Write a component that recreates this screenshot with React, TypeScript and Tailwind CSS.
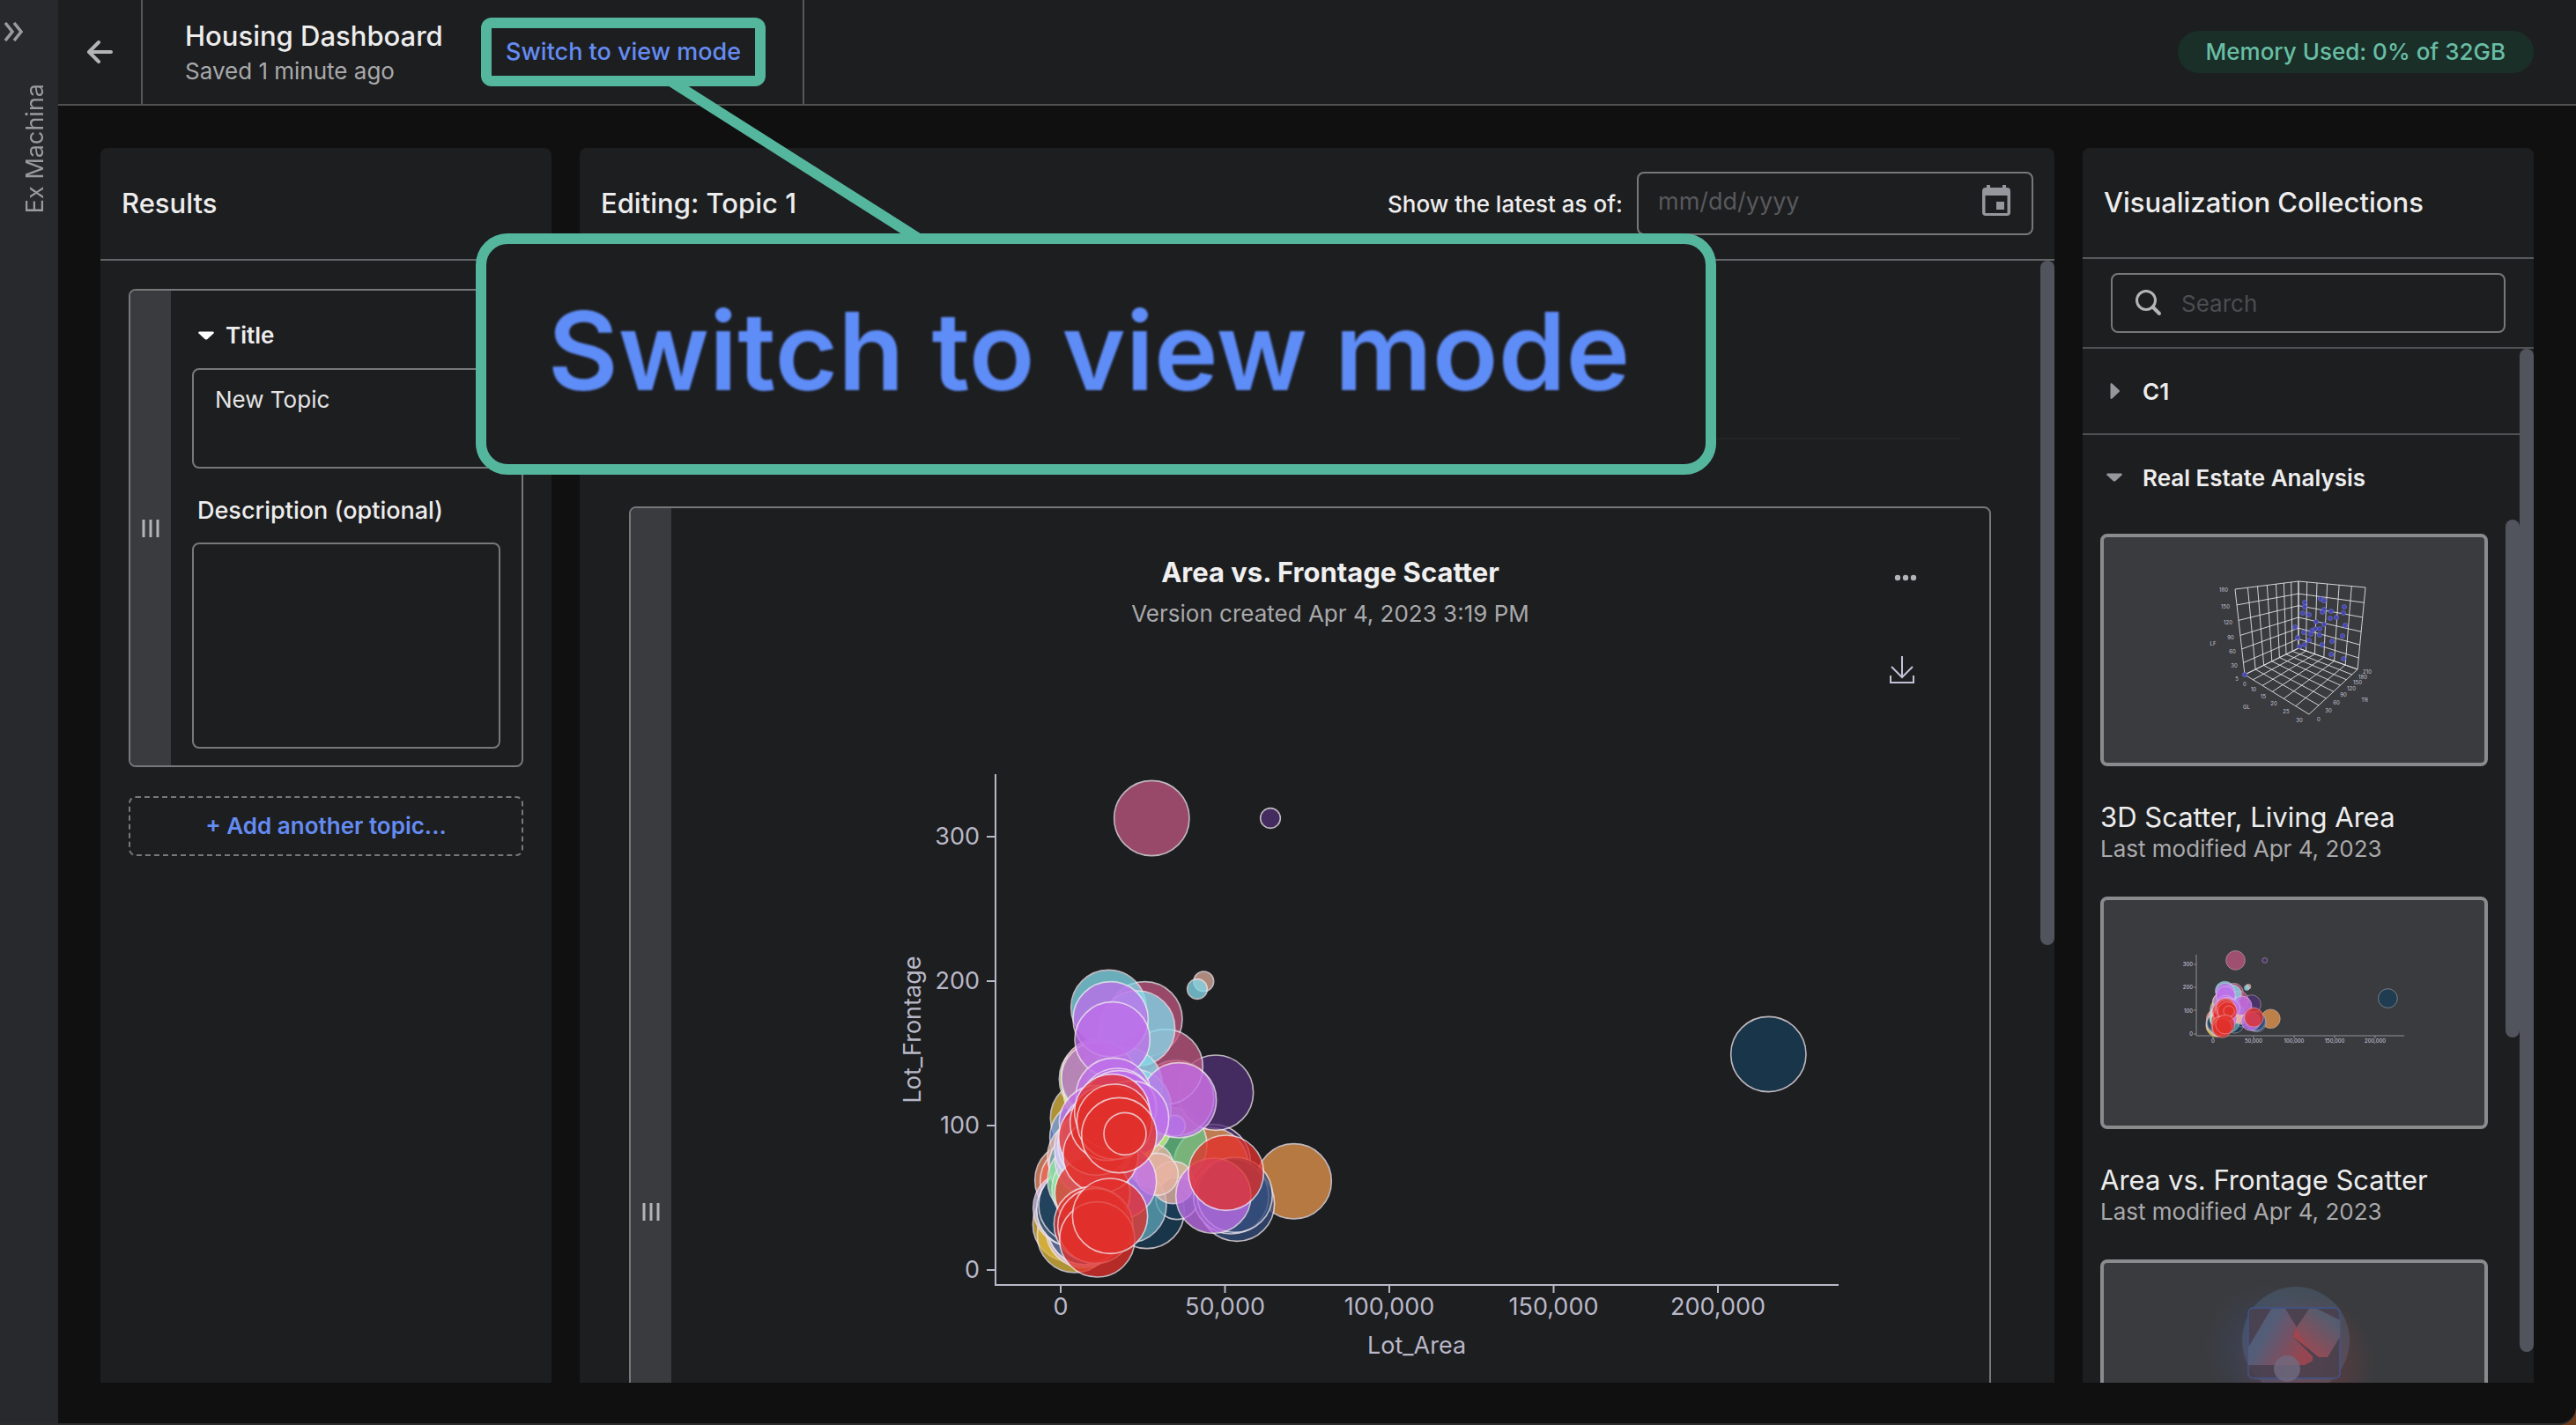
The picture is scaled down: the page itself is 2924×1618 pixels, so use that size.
import React from "react";

type Bubble = [cx: number, cy: number, r: number, fill: string];

const PINK = "#be577f";
const CYAN = "#82d9ea";
const PURPLE = "#bf6eea";
const RED = "#e2302b";
const NAVY = "#193d57";
const INDIGO = "#334c7b";
const PLUM = "#503175";
const ORANGE = "#e6954d";
const GREEN = "#66c485";
const YELLOW = "#dcb63d";
const TEAL = "#5da3b5";
const LIME = "#c4f56f";
const PEACH = "#e8b3a2";
const MINT = "#8fe8a0";
const LAVENDER = "#cfc4f2";

/* Bubble centres are thirds of a pixel, measured from the cluster's own corner. */
const CLUSTER: Bubble[] = [
  [285, 688, 128, YELLOW],
  [225, 1050, 128, YELLOW],
  [240, 1087, 128, YELLOW],
  [232, 900, 128, "#ef8d68"],
  [250, 905, 128, "#ef6a5a"],
  [270, 1070, 128, LAVENDER],
  [275, 1060, 128, INDIGO],
  [226, 995, 128, LAVENDER],
  [238, 1000, 128, NAVY],
  [245, 985, 128, NAVY],
  [283, 755, 128, "#6f9be0"],
  [275, 820, 128, PEACH],
  [280, 850, 128, TEAL],
  [275, 900, 128, MINT],
  [290, 930, 128, MINT],
  [315, 555, 128, LIME],
  [330, 600, 128, LIME],
  [710, 838, 128, PLUM],
  [703, 850, 128, ORANGE],
  [562, 780, 128, GREEN],
  [445, 700, 128, LIME],
  [300, 830, 128, LAVENDER],
  [298, 790, 128, LAVENDER],
  [485, 1005, 128, NAVY],
  [588, 962, 72, NAVY],
  [424, 985, 128, TEAL],
  [500, 850, 75, PEACH],
  [575, 908, 72, PEACH],
  [520, 880, 72, PEACH],
  [720, 602, 128, PLUM],
  [478, 352, 128, PINK],
  [585, 620, 128, PINK],
  [548, 514, 128, PINK],
  [322, 545, 128, PINK],
  [355, 312, 128, CYAN],
  [453, 383, 128, CYAN],
  [410, 575, 128, CYAN],
  [322, 555, 128, "#b58ac8"],
  [440, 650, 128, CYAN],
  [362, 352, 128, PURPLE],
  [368, 421, 128, PURPLE],
  [580, 715, 36, "#8f86e8"],
  [594, 628, 128, PURPLE],
  [372, 612, 128, PURPLE],
  [385, 647, 128, PURPLE],
  [390, 655, 128, PURPLE],
  [432, 690, 128, PURPLE],
  [390, 905, 128, PURPLE],
  [315, 705, 128, PURPLE],
  [325, 735, 128, PURPLE],
  [310, 780, 128, LAVENDER],
  [792, 980, 128, INDIGO],
  [772, 955, 128, INDIGO],
  [785, 950, 128, INDIGO],
  [712, 953, 128, PURPLE],
  [755, 875, 128, RED],
  [986, 904, 128, ORANGE],
  [300, 945, 128, RED],
  [313, 755, 128, RED],
  [328, 815, 128, RED],
  [352, 705, 128, RED],
  [367, 667, 128, RED],
  [375, 701, 128, RED],
  [391, 747, 128, RED],
  [411, 742, 72, RED],
  [297, 1050, 128, RED],
  [310, 1056, 128, RED],
  [316, 1102, 128, RED],
  [360, 1022, 128, RED],
  [679, 223, 34, "#d9a898"],
  [657, 249, 34, CYAN],
  [502, -333, 128, PINK],
  [906, -333, 34, PLUM],
  [2602, 471, 128, NAVY],
];

/* The orange bubble on the right sits beneath the red and indigo ones. */
const ORDERED: Bubble[] = [
  ...CLUSTER.filter(([x, , , f]) => f === ORANGE && x > 900),
  ...CLUSTER.filter(([x, , , f]) => !(f === ORANGE && x > 900)),
];

/* Centres relative to the data origin (0, 0) of the plot, in plot pixels. */
const BUBBLES: Bubble[] = ORDERED.map(([x, y, r, f]) => [x / 3 - 64, y / 3 - 402, r / 3, f]);

const X_TICKS = ["0", "50,000", "100,000", "150,000", "200,000"];
const Y_TICKS = ["0", "100", "200", "300"];

function Bubbles({ ox, oy, sx, sy, sr }: { ox: number; oy: number; sx: number; sy: number; sr: number }) {
  return (
    <g stroke="#f0e6ee" strokeWidth={sr < 1 ? 0.5 : 1.6}>
      {BUBBLES.map(([x, y, r, fill], i) => (
        <circle key={i} cx={ox + x * sx} cy={oy + y * sy} r={r * sr} fill={fill} opacity={0.77} />
      ))}
    </g>
  );
}

function ScatterChart() {
  return (
    <svg viewBox="0 0 1496 700" className="mt-[83px] block w-full" role="img" aria-label="Lot_Frontage against Lot_Area">
      <g stroke="#b9b8c8" strokeWidth="2" fill="none">
        <path d="M368 19V599H1325" />
        {Y_TICKS.map((t, i) => (
          <path key={t} d={`M358 ${582 - i * 164}h10`} />
        ))}
        {X_TICKS.map((t, i) => (
          <path key={t} d={`M${442 + i * 186.5} 599v9`} />
        ))}
      </g>
      <g fill="#b9b8c8" fontSize="27">
        {Y_TICKS.map((t, i) => (
          <text key={t} x="350" y={591 - i * 164} textAnchor="end">
            {t}
          </text>
        ))}
        {X_TICKS.map((t, i) => (
          <text key={t} x={442 + i * 186.5} y="633" textAnchor="middle">
            {t}
          </text>
        ))}
        <text x="846" y="677" textAnchor="middle">
          Lot_Area
        </text>
        <text transform="translate(283 309) rotate(-90)" textAnchor="middle">
          Lot_Frontage
        </text>
      </g>
      <Bubbles ox={442} oy={582} sx={1} sy={1} sr={1} />
    </svg>
  );
}

type Pt = [number, number];
const mix = (a: Pt, b: Pt, t: number): Pt => [a[0] + (b[0] - a[0]) * t, a[1] + (b[1] - a[1]) * t];
const seg = (a: Pt, b: Pt) => `M${a[0].toFixed(1)} ${a[1].toFixed(1)}L${b[0].toFixed(1)} ${b[1].toFixed(1)}`;

function CubeThumb() {
  const TL: Pt = [153, 63];
  const TB: Pt = [225, 54];
  const TR: Pt = [301, 61];
  const BL: Pt = [164, 160];
  const BB: Pt = [225, 130];
  const BR: Pt = [292, 154];
  const F: Pt = [237, 205];
  const left = [0, 0.2, 0.354, 0.505, 0.646, 0.77, 0.885, 1];
  const right = [0, 0.128, 0.276, 0.43, 0.606, 0.793, 1];
  const down = [0, 0.185, 0.365, 0.54, 0.7, 0.86, 1];
  const d = [
    ...left.map((t) => seg(mix(TL, TB, t), mix(BL, BB, t))),
    ...right.map((t) => seg(mix(TB, TR, t), mix(BB, BR, t))),
    ...down.map((t) => seg(mix(TL, BL, t), mix(TB, BB, t))),
    ...down.map((t) => seg(mix(TB, BB, t), mix(TR, BR, t))),
    ...left.map((t) => seg(mix(BL, BB, t), mix(F, BR, t))),
    ...right.map((t) => seg(mix(BL, F, t), mix(BB, BR, t))),
  ].join("");
  const dots: Pt[] = [
    [232, 78], [232, 83], [230, 90], [237, 92], [250, 74], [254, 76], [254, 86], [252, 89], [262, 88], [277, 83],
    [276, 90], [261, 96], [268, 95], [245, 100], [254, 103], [278, 104], [221, 106], [231, 112], [240, 110],
    [244, 108], [249, 108], [239, 114], [249, 115], [275, 116], [224, 118], [237, 121], [263, 122], [252, 126],
    [226, 128], [232, 126], [262, 137], [276, 142], [164, 160],
  ];
  const labels: [number, number, string][] = [
    [140, 64, "180"], [142, 83, "150"], [145, 101, "120"], [148, 118, "90"], [150, 134, "60"], [152, 150, "30"],
    [128, 125, "LF"], [155, 165, "5"], [164, 171, "0"], [174, 177, "10"], [185, 185, "15"], [197, 193, "20"],
    [211, 202, "25"], [226, 212, "30"], [248, 211, "0"], [166, 197, "GL"], [259, 201, "30"], [268, 192, "60"],
    [276, 183, "90"], [285, 176, "120"], [292, 169, "150"], [298, 163, "180"], [303, 157, "210"], [300, 189, "TR"],
  ];
  return (
    <svg viewBox="0 0 440 264" className="block w-full" role="img" aria-label="3D scatter preview">
      <path d={d} stroke="#e4e4e8" strokeWidth="0.9" fill="none" />
      {dots.map(([x, y], i) => (
        <circle key={i} cx={x} cy={y} r="2.6" fill="#4548b4" stroke="#7c7fd0" strokeWidth="0.5" />
      ))}
      <g fill="#c4c3da" fontSize="6" textAnchor="middle">
        {labels.map(([x, y, t], i) => (
          <text key={i} x={x} y={y + 2}>
            {t}
          </text>
        ))}
      </g>
    </svg>
  );
}

function ScatterThumb() {
  return (
    <svg viewBox="0 0 440 264" className="block w-full" role="img" aria-label="Area and frontage preview">
      <path
        d="M109 66V158H345M106 77h3M106 103h3M106 129h3M106 156h3M128 158v3M174 158v3M220 158v3M266 158v3M312 158v3"
        stroke="#8f8f9c"
        strokeWidth="1"
        fill="none"
      />
      <g fill="#d4d3e0" fontSize="6">
        {Y_TICKS.map((t, i) => (
          <text key={t} x="105" y={158 - i * 26.3} textAnchor="end">
            {t}
          </text>
        ))}
        {X_TICKS.map((t, i) => (
          <text key={t} x={128 + i * 46} y="166" textAnchor="middle">
            {t}
          </text>
        ))}
      </g>
      <Bubbles ox={128} oy={155} sx={0.247} sy={0.161} sr={0.255} />
    </svg>
  );
}

function GlowThumb() {
  return (
    <svg viewBox="0 0 440 264" className="block w-full" role="img" aria-label="Abstract shapes preview">
      <defs>
        <radialGradient id="glowRed">
          <stop offset="0" stopColor="#b8444c" stopOpacity="0.38" />
          <stop offset="1" stopColor="#b8444c" stopOpacity="0" />
        </radialGradient>
        <radialGradient id="glowBlue">
          <stop offset="0" stopColor="#4862b0" stopOpacity="0.25" />
          <stop offset="1" stopColor="#4862b0" stopOpacity="0" />
        </radialGradient>
        <linearGradient id="shapeA" x1="0" y1="0" x2="1" y2="0.5">
          <stop offset="0.4" stopColor="#545d78" />
          <stop offset="1" stopColor="#964650" />
        </linearGradient>
        <linearGradient id="shapeB" x1="0.8" y1="0" x2="0.2" y2="0.8">
          <stop offset="0.2" stopColor="#565c6e" />
          <stop offset="1" stopColor="#964a54" />
        </linearGradient>
      </defs>
      <circle cx="222" cy="92" r="61" fill="#444e5a" />
      <circle cx="190" cy="100" r="74" fill="url(#glowBlue)" />
      <circle cx="232" cy="118" r="80" fill="url(#glowRed)" />
      <rect x="168" y="55" width="104" height="80" rx="6" fill="#4a3f4c" fillOpacity="0.8" stroke="#40558c" strokeWidth="1.5" />
      <path d="M194 56H210L223 77L219 88L241 110V115L232 120H168V100Z" fill="url(#shapeA)" />
      <path d="M237 56H246L272 69V88L258 111H248L220 88L223 77Z" fill="url(#shapeB)" />
      <path d="M222 78L219 88L236 101Z" fill="#a0464f" />
      <circle cx="212" cy="124" r="15" fill="#716a80" fillOpacity="0.8" />
    </svg>
  );
}

function Grip() {
  return (
    <div className="flex w-[46px] shrink-0 items-center justify-center bg-[#3a3b3e]">
      <svg width="20" height="22" viewBox="0 0 20 22" aria-hidden="true">
        <path d="M2 1v20M10 1v20M18 1v20" stroke="#b4b4b8" strokeWidth="3" />
      </svg>
    </div>
  );
}

function CaretDown({ color }: { color: string }) {
  return (
    <svg width="20" height="20" viewBox="0 0 20 20" aria-hidden="true">
      <path d="M2 5.500h16q1.500 .8.500 2l-7 6.500q-1.500 1.200-3 0l-7-6.500q-1-1.200.500-2z" fill={color} />
    </svg>
  );
}

function CaretRight({ color }: { color: string }) {
  return (
    <svg width="20" height="20" viewBox="0 0 20 20" aria-hidden="true">
      <path d="M5.500 2v16q.8 1.500 2 .500l8-7.500q1.200-1 0-2l-8-7.500q-1.200-1-2 .500z" fill={color} />
    </svg>
  );
}

function Scrollbar({ thumb }: { thumb: string }) {
  return (
    <div className="w-4 shrink-0">
      <div className={`w-full rounded-full bg-[#52545d] ${thumb}`} />
    </div>
  );
}

function VizCard({ title, children }: { title?: string; children: React.ReactNode }) {
  return (
    <article className="mb-9">
      <div className="h-[264px] overflow-hidden rounded-lg border-4 border-[#8a8b8c] bg-[#3a3b3e]">
        <div className="-m-1">{children}</div>
      </div>
      {title && (
        <>
          <h3 className="mt-10 text-[31px] leading-9 text-[#ededed]">{title}</h3>
          <p className="text-[26px] leading-9 text-[#a9a9ab]">Last modified Apr 4, 2023</p>
        </>
      )}
    </article>
  );
}

function Sidebar() {
  return (
    <nav className="w-[66px] shrink-0 bg-[#28292c] text-[#9b9b9e]" aria-label="Main">
      <button type="button" aria-label="Expand menu" className="block pt-[25px] pl-1">
        <svg width="24" height="22" viewBox="0 0 24 22" fill="none" stroke="currentColor" strokeWidth="3.500">
          <path d="M2 1l8 10-8 10M12 1l8 10-8 10" />
        </svg>
      </button>
      <div className="mt-12 ml-[22px] rotate-180 text-[27px] leading-9 [writing-mode:vertical-rl]">Ex Machina</div>
    </nav>
  );
}

function Header() {
  return (
    <header className="flex h-[120px] shrink-0 items-stretch border-b-2 border-[#505052] bg-[#1d1e20]">
      <button type="button" aria-label="Back" className="flex w-24 items-center justify-center border-r-2 border-[#58585b] text-[#b4b4b6]">
        <svg width="30" height="26" viewBox="0 0 30 26" fill="none" stroke="currentColor" strokeWidth="4">
          <path d="M28 13H4M14 2L3 13l11 11" strokeLinecap="round" strokeLinejoin="round" />
        </svg>
      </button>
      <div className="flex items-center border-r-2 border-[#58585b] pr-[42px] pl-12">
        <div className="w-[336px] pt-1">
          <h1 className="text-[31px] leading-10 font-medium text-[#ededed]">Housing Dashboard</h1>
          <p className="text-[26px] leading-10 text-[#a9a9ab]">Saved 1 minute ago</p>
        </div>
        <div className="rounded-xl bg-[#55b69e] p-3">
          <button type="button" className="bg-[#1d1e20] px-4 text-[27px] leading-[54px] font-medium text-[#648cf2]">
            Switch to view mode
          </button>
        </div>
      </div>
      <div className="mr-12 ml-auto self-center rounded-full bg-[#1a2f28] px-8 text-[26px] leading-[48px] font-medium text-[#68bea5]">
        Memory Used: 0% of 32GB
      </div>
    </header>
  );
}

function ResultsPanel() {
  return (
    <section className="w-[512px] shrink-0 overflow-hidden rounded-t-lg bg-[#1d1e20]">
      <h2 className="h-32 border-b-2 border-[#646568] pl-6 text-[31px] leading-[126px] font-medium text-[#ededed]">Results</h2>
      <div className="px-8 pt-8">
        <div className="flex overflow-hidden rounded-lg border-2 border-[#77787a]">
          <Grip />
          <div className="flex flex-1 flex-col px-6 pt-8 pb-[19px]">
            <label htmlFor="topic-title" className="flex items-center gap-3 pl-1.5 text-[26px] leading-[38px] font-semibold text-[#ededed]">
              <CaretDown color="#ffffff" />
              Title
            </label>
            <textarea
              id="topic-title"
              defaultValue="New Topic"
              className="mt-[18px] block h-[114px] w-full resize-none rounded-lg border-2 border-[#77787a] bg-transparent px-6 py-4 text-[26px] leading-9 text-[#e4e4e4]"
            />
            <label htmlFor="topic-description" className="mt-7 pl-1.5 text-[27px] leading-10 font-medium text-[#ededed]">
              Description (optional)
            </label>
            <textarea
              id="topic-description"
              className="mt-4 block h-[234px] w-full resize-none rounded-lg border-2 border-[#77787a] bg-transparent px-6 py-4 text-[26px] leading-9 text-[#e4e4e4]"
            />
          </div>
        </div>
        <button
          type="button"
          className="mt-[33px] w-full rounded-lg border-2 border-dashed border-[#77787a] text-[26px] leading-[64px] font-semibold text-[#648cf2]"
        >
          + Add another topic...
        </button>
      </div>
    </section>
  );
}

function EditorPanel() {
  return (
    <section className="flex min-w-0 flex-1 flex-col overflow-hidden rounded-t-lg bg-[#1d1e20]">
      <div className="flex h-32 shrink-0 items-center border-b-2 border-[#646568] px-6">
        <h2 className="text-[31px] font-medium text-[#ededed]">Editing: Topic 1</h2>
        <label htmlFor="as-of" className="mr-4 ml-auto text-[26px] font-medium text-[#ededed]">
          Show the latest as of:
        </label>
        <div className="flex h-[72px] w-[450px] items-center rounded-lg border-2 border-[#77787a] pr-6 pl-[22px]">
          <input
            id="as-of"
            type="text"
            placeholder="mm/dd/yyyy"
            className="min-w-0 flex-1 bg-transparent pb-1 text-[27px] text-[#ededed] placeholder:text-[#58595c]"
          />
          <button type="button" aria-label="Pick a date" className="pb-1.5 text-[#96979d]">
            <svg width="32" height="36" viewBox="0 0 32 36" fill="currentColor" fillRule="evenodd">
              <path d="M5 0h4v3h14V0h4v3h1a4 4 0 014 4v24a4 4 0 01-4 4H4a4 4 0 01-4-4V7a4 4 0 014-4h1zM3.500 12v20h25V12zM16 19h9v9h-9z" />
            </svg>
          </button>
        </div>
      </div>
      <div className="flex min-h-0 flex-1">
        <div className="min-w-0 flex-1 overflow-hidden px-14">
          <div className="mr-9 h-[203px] border-b-2 border-[#232426]" />
          <article className="mt-[76px] flex h-[1602px] overflow-hidden rounded-lg border-2 border-[#77787a]">
            <Grip />
            <div className="flex-1 pt-[49px]">
              <div className="grid grid-cols-[1fr_auto_1fr] items-center">
                <h3 className="col-start-2 text-[31px] leading-[48px] font-bold text-[#f0f0f0]">Area vs. Frontage Scatter</h3>
                <button type="button" aria-label="More" className="mt-3 justify-self-end pr-[82px]">
                  <svg width="26" height="8" viewBox="0 0 26 8" fill="#b4b4b8" className="block">
                    <circle cx="4" cy="4" r="3.200" />
                    <circle cx="13" cy="4" r="3.200" />
                    <circle cx="22" cy="4" r="3.200" />
                  </svg>
                </button>
              </div>
              <p className="text-center text-[26px] leading-[46px] text-[#a9a9ab]">Version created Apr 4, 2023 3:19 PM</p>
              <div className="mt-[25px] flex justify-end pr-[85px]">
                <button type="button" aria-label="Download">
                  <svg width="28" height="32" viewBox="0 0 28 32" fill="none" stroke="#c3c3d6" strokeWidth="2" className="block">
                    <path d="M14 0v24M2 12l12 12 12-12M1 22v8h26v-8" />
                  </svg>
                </button>
              </div>
              <ScatterChart />
            </div>
          </article>
        </div>
        <Scrollbar thumb="h-[61%]" />
      </div>
    </section>
  );
}

function CollectionsPanel() {
  return (
    <section className="flex w-[512px] shrink-0 flex-col overflow-hidden rounded-t-lg bg-[#1d1e20]">
      <h2 className="h-[126px] shrink-0 border-b-2 border-[#58595c] pl-6 text-[31px] leading-[124px] font-medium text-[#ededed]">
        Visualization Collections
      </h2>
      <div className="border-b-2 border-[#505154] px-8 py-4">
        <label className="flex h-[68px] items-center gap-[22px] rounded-lg border-2 border-[#77787a] px-6">
          <svg width="32" height="32" viewBox="0 0 32 32" fill="none" stroke="#b4b4b6" strokeWidth="3" aria-hidden="true" className="shrink-0">
            <circle cx="14" cy="13" r="10.500" />
            <path d="M21.500 20.500L29 28" strokeWidth="4" strokeLinecap="round" />
          </svg>
          <input
            type="search"
            aria-label="Search"
            placeholder="Search"
            className="min-w-0 flex-1 bg-transparent text-[26px] text-[#ededed] placeholder:text-[#4c4d50]"
          />
        </label>
      </div>
      <div className="flex min-h-0 flex-1">
        <div className="flex min-w-0 flex-1 flex-col">
          <button
            type="button"
            className="flex h-[98px] shrink-0 items-center gap-[22px] border-b-2 border-[#505154] pl-[26px] text-[26px] font-semibold text-[#ededed]"
          >
            <CaretRight color="#96979d" />
            C1
          </button>
          <button type="button" className="flex h-24 shrink-0 items-center gap-[22px] pl-[26px] text-[26px] font-semibold text-[#ededed]">
            <CaretDown color="#96979d" />
            Real Estate Analysis
          </button>
          <div className="flex min-h-0 flex-1">
            <div className="min-w-0 flex-1 overflow-hidden px-5 pt-4">
              <VizCard title="3D Scatter, Living Area">
                <CubeThumb />
              </VizCard>
              <VizCard title="Area vs. Frontage Scatter">
                <ScatterThumb />
              </VizCard>
              <VizCard>
                <GlowThumb />
              </VizCard>
            </div>
            <Scrollbar thumb="h-[60%]" />
          </div>
        </div>
        <Scrollbar thumb="h-[97%]" />
      </div>
    </section>
  );
}

/* Magnified copy of the view-mode control, joined to it by a leader line. */
function Callout() {
  return (
    <div className="pointer-events-none absolute top-0 left-0">
      <svg width="1100" height="290" viewBox="0 0 1100 290" className="block" aria-hidden="true">
        <path d="M761 92L1043 271" stroke="#55b69e" strokeWidth="12" />
      </svg>
      <div className="absolute top-[265px] left-[540px] flex h-[274px] w-[1408px] items-center justify-center rounded-[36px] border-[12px] border-[#55b69e] bg-[#1d1e20] pr-4 pb-2 text-[123px] leading-none font-semibold whitespace-nowrap text-[#5f8df8]">
        <span className="blur-[1px]">Switch to view mode</span>
      </div>
    </div>
  );
}

export default function App() {
  return (
    <div className="h-screen bg-[#6b3d1c] font-[Inter,sans-serif]">
      <div className="relative flex h-full overflow-hidden rounded-br-[20px] border-b-2 border-[#2c2c2d] bg-[#101010]">
        <Sidebar />
        <div className="flex min-w-0 flex-1 flex-col">
          <Header />
          <main className="flex min-h-0 flex-1 gap-8 px-12 pt-12 pb-[46px]">
            <ResultsPanel />
            <EditorPanel />
            <CollectionsPanel />
          </main>
        </div>
        <Callout />
      </div>
    </div>
  );
}
